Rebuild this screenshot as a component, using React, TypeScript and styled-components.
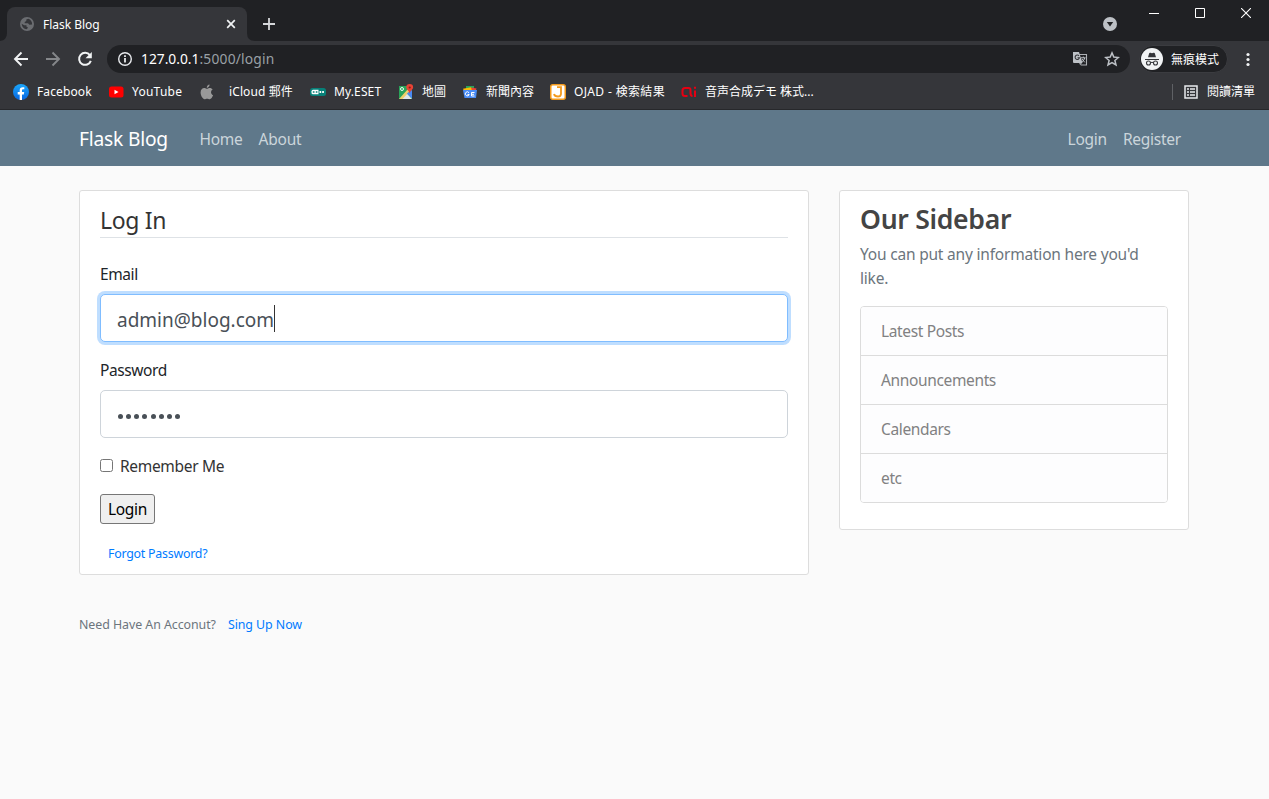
import React from 'react';
import styled, { createGlobalStyle } from 'styled-components';

const GlobalStyle = createGlobalStyle`
  * { box-sizing: border-box; }
  html, body { margin: 0; padding: 0; background: #fafafa; }
  body {
    font-family: "Noto Sans", "Noto Sans CJK TC", sans-serif;
    font-size: 15.5px;
    letter-spacing: -0.2px;
    line-height: 24px;
    color: #333;
    overflow: hidden;
  }
`;

const Window = styled.div`
  width: 1269px;
  height: 799px;
  display: flex;
  flex-direction: column;
  background: #fafafa;
`;

/* Browser chrome */
const Chrome = styled.header`
  height: 110px;
  background: #35363a;
  border-bottom: 1px solid #27282b;
  color: #fff;
  font-size: 12px;
  line-height: 16px;
  letter-spacing: 0;
`;

const TabStrip = styled.div`
  height: 41px;
  display: flex;
  background: #202124;
`;

const TabFoot = styled.svg<{ $width: number }>`
  width: ${p => p.$width}px;
  height: 8px;
  align-self: flex-end;
  flex: none;
`;

const Tab = styled.div`
  width: 240px;
  height: 34px;
  margin-top: 7px;
  padding: 0 11px 0 13px;
  display: flex;
  align-items: center;
  background: #35363a;
  border-radius: 8px 8px 0 0;
`;

const TabTitle = styled.span`
  flex: 1;
  margin-left: 9px;
  padding-top: 2px;
  letter-spacing: -0.03px;
`;

const NewTab = styled.div`
  margin: 17px 0 0 7px;
`;

const WindowControls = styled.div`
  margin-left: auto;
  padding-right: 17px;
  display: flex;
  align-items: flex-start;
`;

const ControlSlot = styled.div<{ $top: number; $gap: number }>`
  display: flex;
  margin: ${p => p.$top}px ${p => p.$gap}px 0 0;
`;

const Toolbar = styled.div`
  height: 36px;
  padding: 0 12px;
  display: flex;
  align-items: center;
`;

const NavButton = styled.div`
  width: 32px;
  display: flex;
  align-items: center;
`;

const AddressBar = styled.div`
  width: 1023px;
  height: 28px;
  margin-left: -1px;
  padding: 0 10px;
  display: flex;
  align-items: center;
  background: #202124;
  border-radius: 14px;
`;

const Url = styled.span`
  flex: 1;
  margin-left: 8px;
  font-size: 13.8px;
  line-height: 20px;
  letter-spacing: 0.2px;
  color: #9aa0a6;
`;

const UrlHost = styled.span`
  color: #fff;
  letter-spacing: 0;
`;

const StarSlot = styled.div`
  display: flex;
  margin-left: 16px;
`;

const IncognitoChip = styled.div`
  width: 89px;
  height: 28px;
  margin-left: 9px;
  padding: 0 0 0 1px;
  display: flex;
  align-items: center;
  gap: 8px;
  background: #202124;
  border: 1px solid #3b3c40;
  border-radius: 14px;
  white-space: nowrap;
`;

const ChipText = styled.span`
  padding-top: 2px;
`;

const MenuSlot = styled.div`
  display: flex;
  margin-left: 16.5px;
`;

const BookmarksBar = styled.div`
  height: 30px;
  padding: 0 14px 0 13px;
  display: flex;
  align-items: center;
`;

const Bookmark = styled.div<{ $width: number; $gap?: number; $track?: number }>`
  flex: none;
  width: ${p => p.$width}px;
  display: flex;
  align-items: center;
  gap: ${p => p.$gap ?? 8}px;
  letter-spacing: ${p => p.$track ?? 0}px;
  white-space: nowrap;
  svg { flex: none; }
`;

const ReadingList = styled.div`
  margin-left: auto;
  padding-left: 10px;
  height: 16px;
  display: flex;
  align-items: center;
  gap: 8px;
  border-left: 1px solid #5f6165;
`;

/* Page */
const Navbar = styled.nav`
  height: 56px;
  padding: 1px 88px 0 79px;
  display: flex;
  align-items: center;
  background: #5f788a;
`;

const Brand = styled.a`
  width: 105px;
  font-size: 19.2px;
  letter-spacing: -0.2px;
  color: #fff;
  white-space: nowrap;
`;

const NavGroup = styled.div<{ $right?: boolean }>`
  display: flex;
  gap: 16px;
  margin-left: ${p => (p.$right ? 'auto' : '15.5px')};
`;

const NavLink = styled.a`
  color: #cbd5db;
  letter-spacing: -0.25px;
`;

const Main = styled.main`
  display: flex;
  align-items: flex-start;
  gap: 30px;
  padding: 24px 80px 0 79px;
`;

const Card = styled.section<{ $width: number; $height: number }>`
  width: ${p => p.$width}px;
  height: ${p => p.$height}px;
  padding: 10px 20px;
  background: #fff;
  border: 1px solid #ddd;
  border-radius: 3px;
`;

const Column = styled.div`
  display: flex;
  flex-direction: column;
`;

const Legend = styled.h2`
  height: 37px;
  margin: 0 0 24px;
  font-size: 23px;
  font-weight: 400;
  line-height: 39px;
  letter-spacing: -0.35px;
  border-bottom: 1px solid #dee2e6;
`;

const Label = styled.label`
  display: block;
  height: 24px;
  margin-bottom: 8px;
  color: #212529;
  letter-spacing: -0.4px;
`;

const Field = styled.div<{ $focused?: boolean }>`
  height: 48px;
  margin-bottom: 16px;
  padding: 3px 16px 0;
  display: flex;
  align-items: center;
  font-size: 19px;
  letter-spacing: 0;
  color: #495057;
  background: #fff;
  border: 1px solid ${p => (p.$focused ? '#80bdff' : '#ced4da')};
  border-radius: 5px;
  box-shadow: ${p => (p.$focused ? '0 0 0 3px rgba(0, 123, 255, 0.25)' : 'none')};
`;

const Caret = styled.span`
  width: 1px;
  height: 27px;
  margin-bottom: 3px;
  background: #333;
`;

const Dots = styled.span`
  display: flex;
  gap: 3px;
  margin-left: 1px;
  padding-top: 1px;
`;

const Dot = styled.span`
  width: 5px;
  height: 5px;
  margin-right: 0.15px;
  border-radius: 50%;
  background: #495057;
`;

const RememberRow = styled.label`
  height: 24px;
  margin-bottom: 16px;
  display: flex;
  align-items: center;
  gap: 7px;
  letter-spacing: -0.32px;
`;

const CheckBox = styled.span`
  width: 13px;
  height: 13px;
  margin-bottom: 1px;
  border: 1px solid #767676;
  border-radius: 2.5px;
  background: #fff;
`;

const SubmitButton = styled.button`
  display: block;
  width: 55px;
  height: 30px;
  padding: 0;
  font: inherit;
  line-height: 28px;
  letter-spacing: -0.3px;
  color: #000;
  background: #efefef;
  border: 1px solid #767676;
  border-radius: 3px;
`;

const SmallText = styled.div<{ $top: number; $left?: number; $track: number }>`
  margin: ${p => p.$top}px 0 0 ${p => p.$left ?? 0}px;
  font-size: 12.4px;
  line-height: 20px;
  letter-spacing: ${p => p.$track}px;
  color: #6c757d;
  display: flex;
  gap: 12px;
`;

const Link = styled.a`
  color: #007bff;
`;

const SidebarTitle = styled.h3`
  margin: 0 0 6px;
  padding-top: 1px;
  font-size: 26.6px;
  font-weight: 600;
  line-height: 34px;
  letter-spacing: -0.3px;
  color: #444;
`;

const SidebarText = styled.p`
  margin: 0 0 16px;
  color: #6c757d;
  white-space: nowrap;
`;

const List = styled.ul`
  margin: 0;
  padding: 0;
  list-style: none;
  border: 1px solid #dcdcdc;
  border-radius: 4px;
  overflow: hidden;
`;

const ListItem = styled.li`
  height: 49px;
  padding: 12px 20px;
  background: #fdfdfe;
  color: #818182;
  letter-spacing: -0.36px;
  border-bottom: 1px solid #dcdcdc;
  &:last-child { height: 48px; border-bottom: 0; }
`;

const GlobeIcon = () => (
  <svg width="14" height="14" viewBox="0 0 14 14">
    <circle cx="7" cy="7" r="7" fill="#6b6d71" />
    <path d="M8.300 1.700 6.300 2.600v1.300L4.700 5v1.200h3.300l1.400 1.500 2.700-.3c.2-2.600-1.400-5-3.800-5.700ZM1.700 6.800l2.500 1.400h2.300v1.500l1.400.6-.8 1.800C4.300 12.500 1.800 10 1.700 6.800Z" fill="#35363a" />
  </svg>
);

const CloseIcon = () => (
  <svg width="10" height="10" viewBox="0 0 10 10">
    <path d="m1.200 1.200 7.600 7.600m0-7.600L1.200 8.800" stroke="#f1f3f4" strokeWidth="1.700" />
  </svg>
);

const PlusIcon = () => (
  <svg width="14" height="14" viewBox="0 0 14 14" display="block">
    <path d="M7 1v12M1 7h12" stroke="#d5d7da" strokeWidth="1.800" />
  </svg>
);

const DropIcon = () => (
  <svg width="14" height="14" viewBox="0 0 14 14">
    <circle cx="7" cy="7" r="7" fill="#bdc1c6" />
    <path d="M3.800 5h6.400L7 9.400Z" fill="#202124" />
  </svg>
);

const MinimizeIcon = () => (
  <svg width="10" height="10" viewBox="0 0 10 10"><path d="M0 5.500h10" stroke="#fff" /></svg>
);

const MaximizeIcon = () => (
  <svg width="10" height="10" viewBox="0 0 10 10"><path d="M.5.5h9v9h-9Z" fill="none" stroke="#fff" /></svg>
);

const WindowCloseIcon = () => (
  <svg width="10" height="10" viewBox="0 0 10 10"><path d="m0 0 10 10M10 0 0 10" stroke="#fff" strokeWidth="1.100" /></svg>
);

const ArrowIcon = ({ forward }: { forward?: boolean }) => (
  <svg width="18" height="16" viewBox="0 0 18 16">
    <path
      d={forward ? 'M2 8h13M8.500 1.500 15 8l-6.500 6.500' : 'M16 8H3M9.500 1.500 3 8l6.500 6.500'}
      fill="none"
      stroke={forward ? '#85878a' : '#f1f3f4'}
      strokeWidth="1.900"
    />
  </svg>
);

const ReloadIcon = () => (
  <svg width="18" height="16" viewBox="0 0 18 16">
    <path d="M13.900 4.200A6 6 0 1 0 14.800 9.800" fill="none" stroke="#f1f3f4" strokeWidth="2" />
    <path d="M15.800 1v6.300H9.500Z" fill="#f1f3f4" />
  </svg>
);

const InfoIcon = () => (
  <svg width="16" height="16" viewBox="0 0 16 16">
    <circle cx="8" cy="8" r="6.300" fill="none" stroke="#e8eaed" strokeWidth="1.400" />
    <path d="M8 7v4.500M8 4.300v1.700" stroke="#e8eaed" strokeWidth="1.800" />
  </svg>
);

const TranslateIcon = () => (
  <svg width="16" height="16" viewBox="0 0 16 16">
    <path d="M7 3.500h7.500v10.500H9" fill="none" stroke="#aeb1b5" strokeWidth="1.100" />
    <path d="M1 1h6l3.500 11H2a1 1 0 0 1-1-1Z" fill="#bdc1c6" />
    <path d="M7 4.800A2.200 2.200 0 1 0 7.500 6.700H5.500" fill="none" stroke="#35363a" strokeWidth="1.100" />
    <path d="M9 6.800h4.500m-2.200-1.200v1.200m1.500 0c-.4 1.700-1.200 2.800-2.500 4m-.1-2.700 2.500 3.200" fill="none" stroke="#bdc1c6" />
    <path d="m7 12 3 0-1.600 2.500Z" fill="#9da0a4" />
  </svg>
);

const StarIcon = () => (
  <svg width="16" height="16" viewBox="0 0 16 16">
    <path d="m8 1.900 1.800 4.200 4.600.4-3.500 3 1.100 4.500L8 11.600 4 14l1.100-4.500-3.500-3 4.600-.4Z" fill="none" stroke="#bdc1c6" strokeWidth="1.500" />
  </svg>
);

const IncognitoIcon = () => (
  <svg width="22" height="22" viewBox="0 0 22 22">
    <circle cx="11" cy="11" r="11" fill="#f1f3f4" />
    <path d="m7 9.200 1.200-3.900q.3-.8 1.200-.5l1.600.5 1.600-.5q.9-.3 1.200.5L15 9.200Z" fill="#35363a" />
    <path d="M4 11.500h14M9.500 14.700q1.500-.8 3 0" fill="none" stroke="#35363a" />
    <circle cx="7.500" cy="15" r="2" fill="none" stroke="#35363a" strokeWidth="1.100" />
    <circle cx="14.500" cy="15" r="2" fill="none" stroke="#35363a" strokeWidth="1.100" />
  </svg>
);

const MoreIcon = () => (
  <svg width="6" height="16" viewBox="0 0 6 16" fill="#f1f3f4">
    <circle cx="3" cy="3.500" r="1.600" /><circle cx="3" cy="8.500" r="1.600" /><circle cx="3" cy="13.500" r="1.600" />
  </svg>
);

const FacebookIcon = () => (
  <svg width="16" height="16" viewBox="0 0 16 16">
    <defs><linearGradient id="fb" x2="0" y2="1"><stop stopColor="#1aa7fb" /><stop offset="1" stopColor="#0866e0" /></linearGradient></defs>
    <circle cx="8" cy="8" r="8" fill="url(#fb)" />
    <path d="M6.700 16v-5.600h-2V8h2V6.300c0-2 1.100-3.100 3-3.100l1.600.1v2h-1c-1 0-1.300.5-1.300 1.200V8h2.200l-.4 2.400H9V16Z" fill="#fff" />
  </svg>
);

const YouTubeIcon = () => (
  <svg width="16" height="16" viewBox="0 0 16 16">
    <rect x="1" y="2.500" width="14.500" height="11" rx="2.500" fill="#f00" />
    <path d="M6.500 5.700 10.500 8l-4 2.300Z" fill="#fff" />
  </svg>
);

const AppleIcon = () => (
  <svg width="16" height="16" viewBox="0 0 16 16" fill="#999">
    <path d="M10.600.6c.1 1.900-1.200 3.300-2.800 3.300C7.600 2.200 9.100.7 10.600.6Z" />
    <path d="M8 4.800c.7 0 1.400-.8 2.700-.8s2.300.6 3 1.600c-2.400 1.400-2.100 4.700.4 5.700-.7 1.800-2 3.900-3.400 3.900-1 0-1.400-.5-2.600-.5s-1.600.5-2.500.5c-1.900 0-4-3.700-4-6.700C1.600 5.600 3.300 4 5.200 4c1.300 0 2 .8 2.800.8Z" />
  </svg>
);

const EsetIcon = () => (
  <svg width="16" height="16" viewBox="0 0 16 16">
    <rect y="4" width="16" height="8" rx="2.500" fill="#078078" />
    <path d="M1.500 7.300q0-1.500 1.500-1.500h5.500v4.400H3q-1.500 0-1.500-1.500Z" fill="#fff" />
    <path d="M2.800 8h1.700m1.300 0h1.600" stroke="#078078" strokeWidth="1.300" />
    <path d="M9.500 8h1.700m1 0h1.700" stroke="#fff" strokeWidth="1.800" />
  </svg>
);

const MapsIcon = () => (
  <svg width="16" height="16" viewBox="0 0 16 16">
    <path d="M1 2h11l2 5v8H1Z" fill="#29a35a" />
    <path d="m2 15 6-6.500 6 6.500Z" fill="#dfe4ea" />
    <path d="m1 15 9-10 2 2-7.500 8Z" fill="#f0cf6b" />
    <path d="m9 9.500 5-3.500v8.500Z" fill="#4a89f3" />
    <circle cx="4" cy="5" r="1.500" fill="none" stroke="#eafaf0" />
    <path d="M11.700 0A3.400 3.400 0 0 0 8.300 3.500c0 2 2.800 3.100 3.200 6 .8-3 3.600-4 3.600-6A3.400 3.400 0 0 0 11.700 0Z" fill="#e94335" />
    <circle cx="11.700" cy="3.500" r="1.100" fill="#852018" />
  </svg>
);

const NewsIcon = () => (
  <svg width="16" height="16" viewBox="0 0 16 16">
    <path d="M4 2h8v5H4Z" fill="#28a55a" />
    <path d="m9 3.500 5.500 1-1 3H8Z" fill="#ea4335" />
    <path d="m1 4.800 8-1.500 1 4H2Z" fill="#fbbc04" />
    <path d="M1 6h14l-1 8H2.500Z" fill="#4a8df6" />
    <path d="M7 8.800A2 2 0 1 0 7.200 10.500H5.500M12.500 8.500h-3V12h3M9.500 10.300h2.500" fill="none" stroke="#fff" />
  </svg>
);

const OjadIcon = () => (
  <svg width="16" height="16" viewBox="0 0 16 16">
    <rect x=".75" y=".75" width="14.500" height="14.500" rx="2" fill="#fff" stroke="#f39a1b" strokeWidth="1.500" />
    <path d="M7 3.200h4v6.600A3 3 0 0 1 8 12.500c-2 0-3.600-.8-4-2.500" fill="none" stroke="#f39a1b" strokeWidth="1.800" />
  </svg>
);

const AiIcon = () => (
  <svg width="16" height="16" viewBox="0 0 16 16" fill="none" stroke="#e60012" strokeWidth="2">
    <path d="M9.500 9.500V6q0-2-2-2H4Q1.500 4 1.500 6.500V9.500q0 2.500 2.500 2.500h2.500M9.500 9q0 3 2 3M14 6.500V13M14 2.800v2" />
  </svg>
);

const ReadingListIcon = () => (
  <svg width="16" height="16" viewBox="0 0 16 16">
    <path d="M2 2h12v12H2Z" fill="none" stroke="#e8eaed" strokeWidth="1.500" />
    <path d="M4 5h2m1 0h5M4 8h2m1 0h5M4 11h2m1 0h5" stroke="#e8eaed" strokeWidth="1.600" />
  </svg>
);

export default function App() {
  return (
    <Window>
      <GlobalStyle />
      <Chrome>
        <TabStrip>
          <TabFoot $width={7} viewBox="0 0 7 8"><path d="M7 0v8H0Q7 7 7 0Z" fill="#35363a" /></TabFoot>
          <Tab>
            <GlobeIcon />
            <TabTitle>Flask Blog</TabTitle>
            <CloseIcon />
          </Tab>
          <TabFoot $width={8} viewBox="0 0 8 8"><path d="M0 0v8h8Q0 8 0 0Z" fill="#35363a" /></TabFoot>
          <NewTab><PlusIcon /></NewTab>
          <WindowControls>
            <ControlSlot $top={17} $gap={32}><DropIcon /></ControlSlot>
            <ControlSlot $top={8} $gap={36}><MinimizeIcon /></ControlSlot>
            <ControlSlot $top={8} $gap={36}><MaximizeIcon /></ControlSlot>
            <ControlSlot $top={8} $gap={1}><WindowCloseIcon /></ControlSlot>
          </WindowControls>
        </TabStrip>
        <Toolbar>
          <NavButton><ArrowIcon /></NavButton>
          <NavButton><ArrowIcon forward /></NavButton>
          <NavButton><ReloadIcon /></NavButton>
          <AddressBar>
            <InfoIcon />
            <Url><UrlHost>127.0.0.1</UrlHost>:5000/login</Url>
            <TranslateIcon />
            <StarSlot><StarIcon /></StarSlot>
          </AddressBar>
          <IncognitoChip><IncognitoIcon /><ChipText>無痕模式</ChipText></IncognitoChip>
          <MenuSlot><MoreIcon /></MenuSlot>
        </Toolbar>
        <BookmarksBar>
          <Bookmark $width={95} $track={0.12}><FacebookIcon />Facebook</Bookmark>
          <Bookmark $width={91} $track={0.25}><YouTubeIcon />YouTube</Bookmark>
          <Bookmark $width={111} $gap={14} $track={0.1}><AppleIcon />iCloud 郵件</Bookmark>
          <Bookmark $width={88} $track={0.12}><EsetIcon />My.ESET</Bookmark>
          <Bookmark $width={64}><MapsIcon />地圖</Bookmark>
          <Bookmark $width={88}><NewsIcon />新聞內容</Bookmark>
          <Bookmark $width={131} $track={0.35}><OjadIcon />OJAD - 検索結果</Bookmark>
          <Bookmark $width={140}><AiIcon />音声合成デモ 株式...</Bookmark>
          <ReadingList><ReadingListIcon />閱讀清單</ReadingList>
        </BookmarksBar>
      </Chrome>
      <Navbar>
        <Brand>Flask Blog</Brand>
        <NavGroup>
          <NavLink>Home</NavLink>
          <NavLink>About</NavLink>
        </NavGroup>
        <NavGroup $right>
          <NavLink>Login</NavLink>
          <NavLink>Register</NavLink>
        </NavGroup>
      </Navbar>
      <Main>
        <Column>
          <Card $width={730} $height={385}>
            <Legend>Log In</Legend>
            <Label>Email</Label>
            <Field $focused>admin@blog.com<Caret /></Field>
            <Label>Password</Label>
            <Field>
              <Dots>{Array.from({ length: 8 }, (_, i) => <Dot key={i} />)}</Dots>
            </Field>
            <RememberRow><CheckBox />Remember Me</RememberRow>
            <SubmitButton>Login</SubmitButton>
            <SmallText $top={20} $left={8} $track={-0.24}><Link>Forgot Password?</Link></SmallText>
          </Card>
          <SmallText $top={40} $track={-0.06}>Need Have An Acconut?<Link>Sing Up Now</Link></SmallText>
        </Column>
        <Card $width={350} $height={340}>
          <SidebarTitle>Our Sidebar</SidebarTitle>
          <SidebarText>You can put any information here you'd<br />like.</SidebarText>
          <List>
            <ListItem>Latest Posts</ListItem>
            <ListItem>Announcements</ListItem>
            <ListItem>Calendars</ListItem>
            <ListItem>etc</ListItem>
          </List>
        </Card>
      </Main>
    </Window>
  );
}
